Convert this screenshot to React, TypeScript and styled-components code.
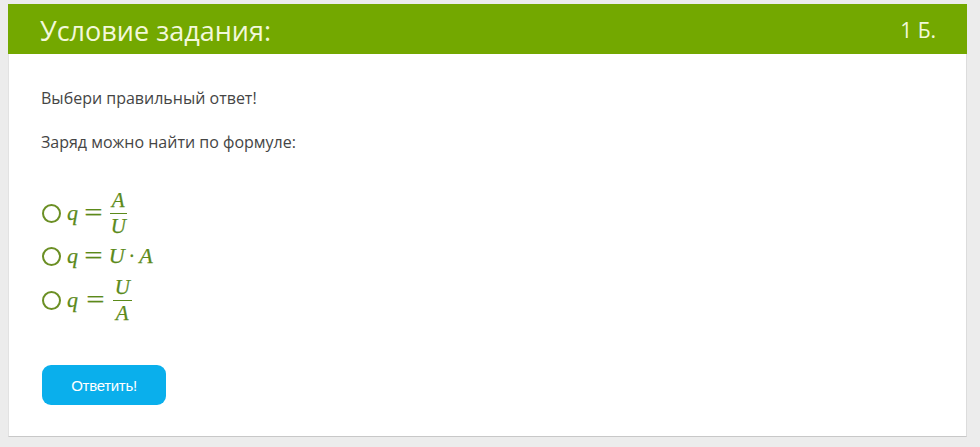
import React from 'react';
import styled, { createGlobalStyle } from 'styled-components';

const Global = createGlobalStyle`
  html, body {
    margin: 0;
    padding: 0;
    background: #ececec;
  }
  body {
    font-family: "Open Sans", "Liberation Sans", sans-serif;
  }
`;

const S = {
  Page: styled.div`
    padding: 4px 13px 10px 8px;
  `,
  Card: styled.div`
    background: #ffffff;
    border-left: 1px solid #e2e2e2;
    border-right: 1px solid #dcdcdc;
    border-bottom: 1px solid #c8c8c8;
    height: 433px;
    box-sizing: border-box;
  `,
  Header: styled.div`
    height: 50px;
    background: #73a800;
    display: flex;
    align-items: center;
    justify-content: space-between;
    padding: 0 31px 0 32px;
    margin: 0 -1px;
    color: #f2f8da;
  `,
  Title: styled.h1`
    margin: 0;
    font-size: 27px;
    font-weight: 400;
    line-height: 1;
    padding-top: 2px;
  `,
  Points: styled.span`
    font-size: 21px;
    line-height: 1;
    padding-top: 2px;
  `,
  Body: styled.div`
    padding: 34px 32px 0 32px;
    color: #454545;
    font-size: 16px;
  `,
  Para: styled.p`
    margin: 0 0 24px 0;
    line-height: 20px;
  `,
  Options: styled.div`
    display: flex;
    flex-direction: column;
    margin-top: 38px;
  `,
  Option: styled.label<{ $h: number }>`
    display: flex;
    align-items: center;
    height: ${(p) => p.$h}px;
    gap: 6px;
    color: #5b8a1a;
    cursor: pointer;
  `,
  Radio: styled.span`
    width: 15px;
    height: 15px;
    border: 2px solid #6b8f24;
    border-radius: 50%;
    flex-shrink: 0;
    margin-left: 1px;
  `,
  Math: styled.span`
    display: inline-flex;
    align-items: center;
    font-family: "Liberation Serif", "DejaVu Serif", serif;
    font-style: italic;
    font-size: 22px;
    color: #5b8a1a;
    -webkit-text-stroke: 0.25px #5b8a1a;
  `,
  Op: styled.span<{ $w?: number; $s?: number }>`
    display: inline-block;
    font-style: normal;
    font-size: ${(p) => p.$s ?? 26}px;
    line-height: 1;
    padding: 0 ${(p) => p.$w ?? 8}px;
  `,
  Eq: styled.span`
    display: inline-block;
    transform: scaleX(1.25);
  `,
  Frac: styled.span`
    display: inline-flex;
    flex-direction: column;
    align-items: center;
    line-height: 21px;
    font-size: 21px;
  `,
  Num: styled.span`
    padding: 0 2px 2px;
    border-bottom: 1.5px solid #5b8a1a;
  `,
  Den: styled.span`
    padding: 2px 2px 0;
  `,
  Button: styled.button`
    margin-top: 41px;
    margin-left: 1px;
    width: 124px;
    height: 40px;
    border: none;
    border-radius: 9px;
    background: #0aafec;
    color: #ffffff;
    font-family: "Liberation Sans", Arial, sans-serif;
    font-size: 15px;
    letter-spacing: -0.3px;
    cursor: pointer;
  `,
};

function Fraction({ top, bottom }: { top: string; bottom: string }) {
  return (
    <S.Frac>
      <S.Num>{top}</S.Num>
      <S.Den>{bottom}</S.Den>
    </S.Frac>
  );
}

function Equals({ w }: { w?: number }) {
  return (
    <S.Op $w={w}>
      <S.Eq>=</S.Eq>
    </S.Op>
  );
}

export default function App() {
  return (
    <>
      <Global />
      <S.Page>
        <S.Card>
          <S.Header>
            <S.Title>Условие задания:</S.Title>
            <S.Points>1 Б.</S.Points>
          </S.Header>
          <S.Body>
            <S.Para>Выбери правильный ответ!</S.Para>
            <S.Para>Заряд можно найти по формуле:</S.Para>
            <S.Options>
              <S.Option $h={46}>
                <S.Radio />
                <S.Math>
                  q<Equals />
                  <Fraction top="A" bottom="U" />
                </S.Math>
              </S.Option>
              <S.Option $h={40}>
                <S.Radio />
                <S.Math>
                  q<Equals />U<S.Op $w={4} $s={20}>·</S.Op>A
                </S.Math>
              </S.Option>
              <S.Option $h={48}>
                <S.Radio />
                <S.Math>
                  q<Equals w={10} />
                  <Fraction top="U" bottom="A" />
                </S.Math>
              </S.Option>
            </S.Options>
            <S.Button>Ответить!</S.Button>
          </S.Body>
        </S.Card>
      </S.Page>
    </>
  );
}
